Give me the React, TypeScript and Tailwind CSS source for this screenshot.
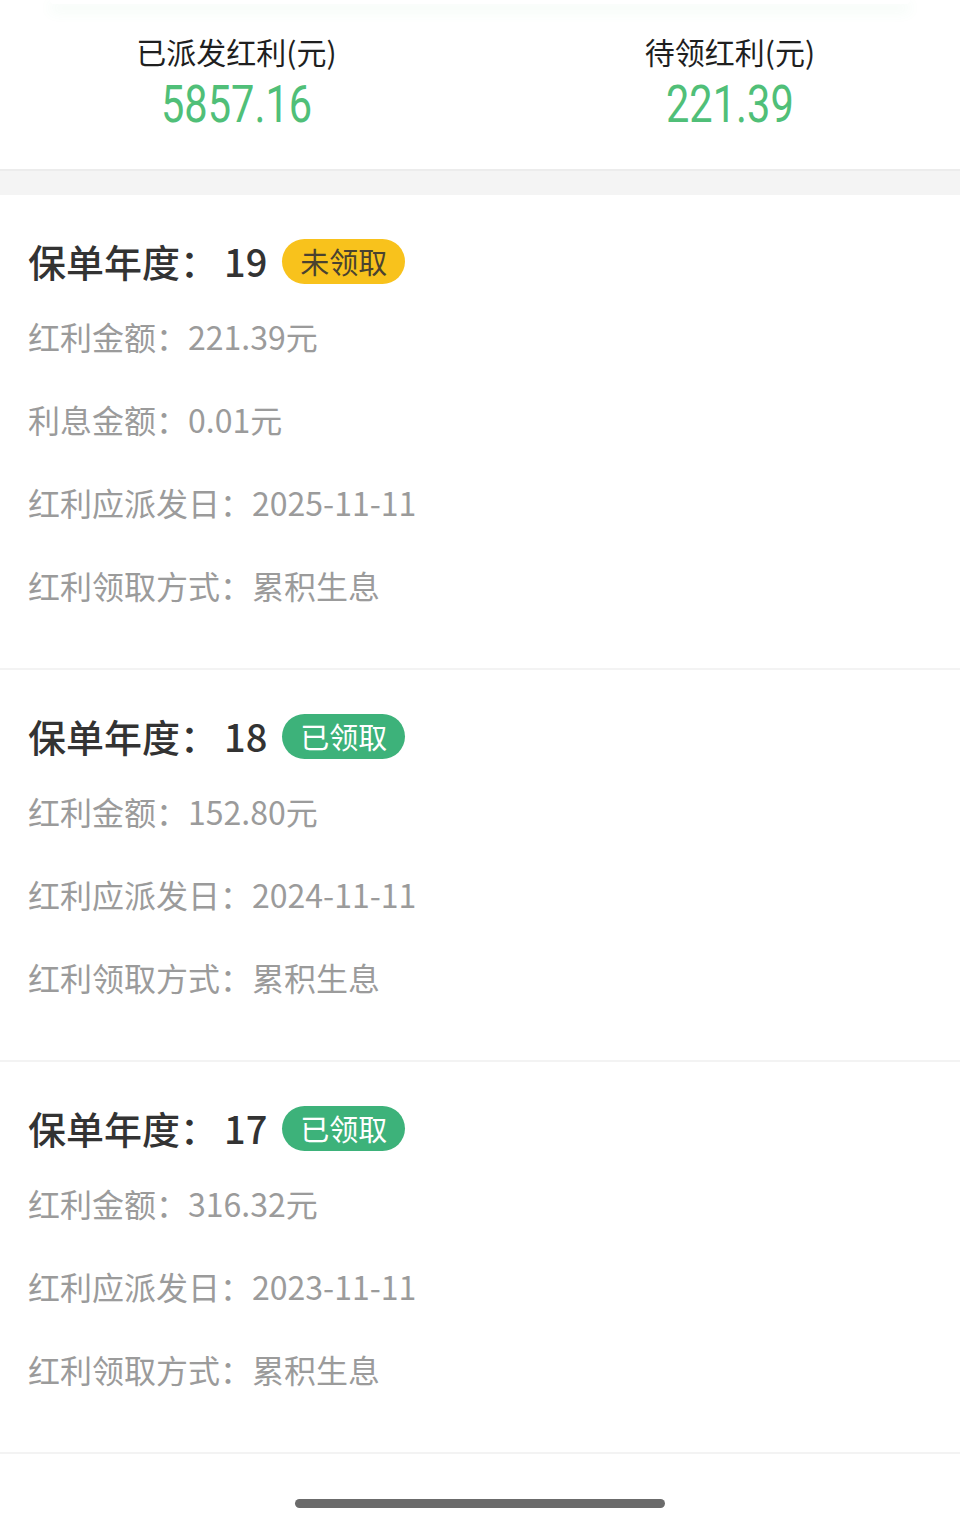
const FONT = "font-['Noto_Sans_CJK_SC','Noto_Sans',sans-serif]";

type Row = { label: string; value: string };
type Year = { year: number; claimed: boolean; rows: Row[] };

const YEARS: Year[] = [
  {
    year: 19,
    claimed: false,
    rows: [
      { label: "红利金额：", value: "221.39元" },
      { label: "利息金额：", value: "0.01元" },
      { label: "红利应派发日：", value: "2025-11-11" },
      { label: "红利领取方式：", value: "累积生息" },
    ],
  },
  {
    year: 18,
    claimed: true,
    rows: [
      { label: "红利金额：", value: "152.80元" },
      { label: "红利应派发日：", value: "2024-11-11" },
      { label: "红利领取方式：", value: "累积生息" },
    ],
  },
  {
    year: 17,
    claimed: true,
    rows: [
      { label: "红利金额：", value: "316.32元" },
      { label: "红利应派发日：", value: "2023-11-11" },
      { label: "红利领取方式：", value: "累积生息" },
    ],
  },
];

function Summary({ label, amount }: { label: string; amount: string }) {
  return (
    <div className="flex flex-col items-center">
      <p className="text-[30px] leading-[40px] text-[#1f1f1f]">{label}</p>
      <p className="mt-[4px] inline-block origin-center scale-x-[0.8] font-['Roboto','Noto_Sans',sans-serif] text-[52px] leading-[60px] text-[#50bf78]">
        {amount}
      </p>
    </div>
  );
}

function YearSection({ item }: { item: Year }) {
  return (
    <section className="border-b-2 border-[#f3f3f3] px-[28px] pt-[43px] pb-[42px]">
      <div className="flex h-[46px] items-center">
        <h2 className="text-[38px] font-medium leading-[46px] text-[#333333]">
          保单年度：<span className="ml-[6px]">{item.year}</span>
        </h2>
        <span
          className={`ml-[15px] flex h-[45px] items-center rounded-full px-[18px] text-[29px] leading-none ${
            item.claimed ? "bg-[#3db27a] text-white" : "bg-[#f8c21c] text-[#4a4230]"
          }`}
        >
          {item.claimed ? "已领取" : "未领取"}
        </span>
      </div>
      <div className="mt-[10px]">
        {item.rows.map((row) => (
          <div key={row.label} className="flex h-[83px] items-center text-[32px] text-[#9b9b9b]">
            {row.label}
            {row.value}
          </div>
        ))}
      </div>
    </section>
  );
}

export default function App() {
  return (
    <div className={`min-h-[1523px] w-[960px] bg-white ${FONT}`}>
      <div className="mx-[50px] h-[4px] rounded-b-[20px] bg-white shadow-[0_6px_14px_rgba(76,190,118,0.14)]" />
      <div className="grid h-[165px] grid-cols-2 pt-[27px]">
        <div className="pr-[7px]">
          <Summary label="已派发红利(元)" amount="5857.16" />
        </div>
        <div className="pl-[20px]">
          <Summary label="待领红利(元)" amount="221.39" />
        </div>
      </div>
      <div className="h-[26px] border-t-2 border-[#ececec] bg-[#f4f4f4]" />
      {YEARS.map((item) => (
        <YearSection key={item.year} item={item} />
      ))}
      <div className="flex justify-center pt-[45px]">
        <div className="h-[9px] w-[370px] rounded-full bg-[#6b6b6b]" />
      </div>
    </div>
  );
}
